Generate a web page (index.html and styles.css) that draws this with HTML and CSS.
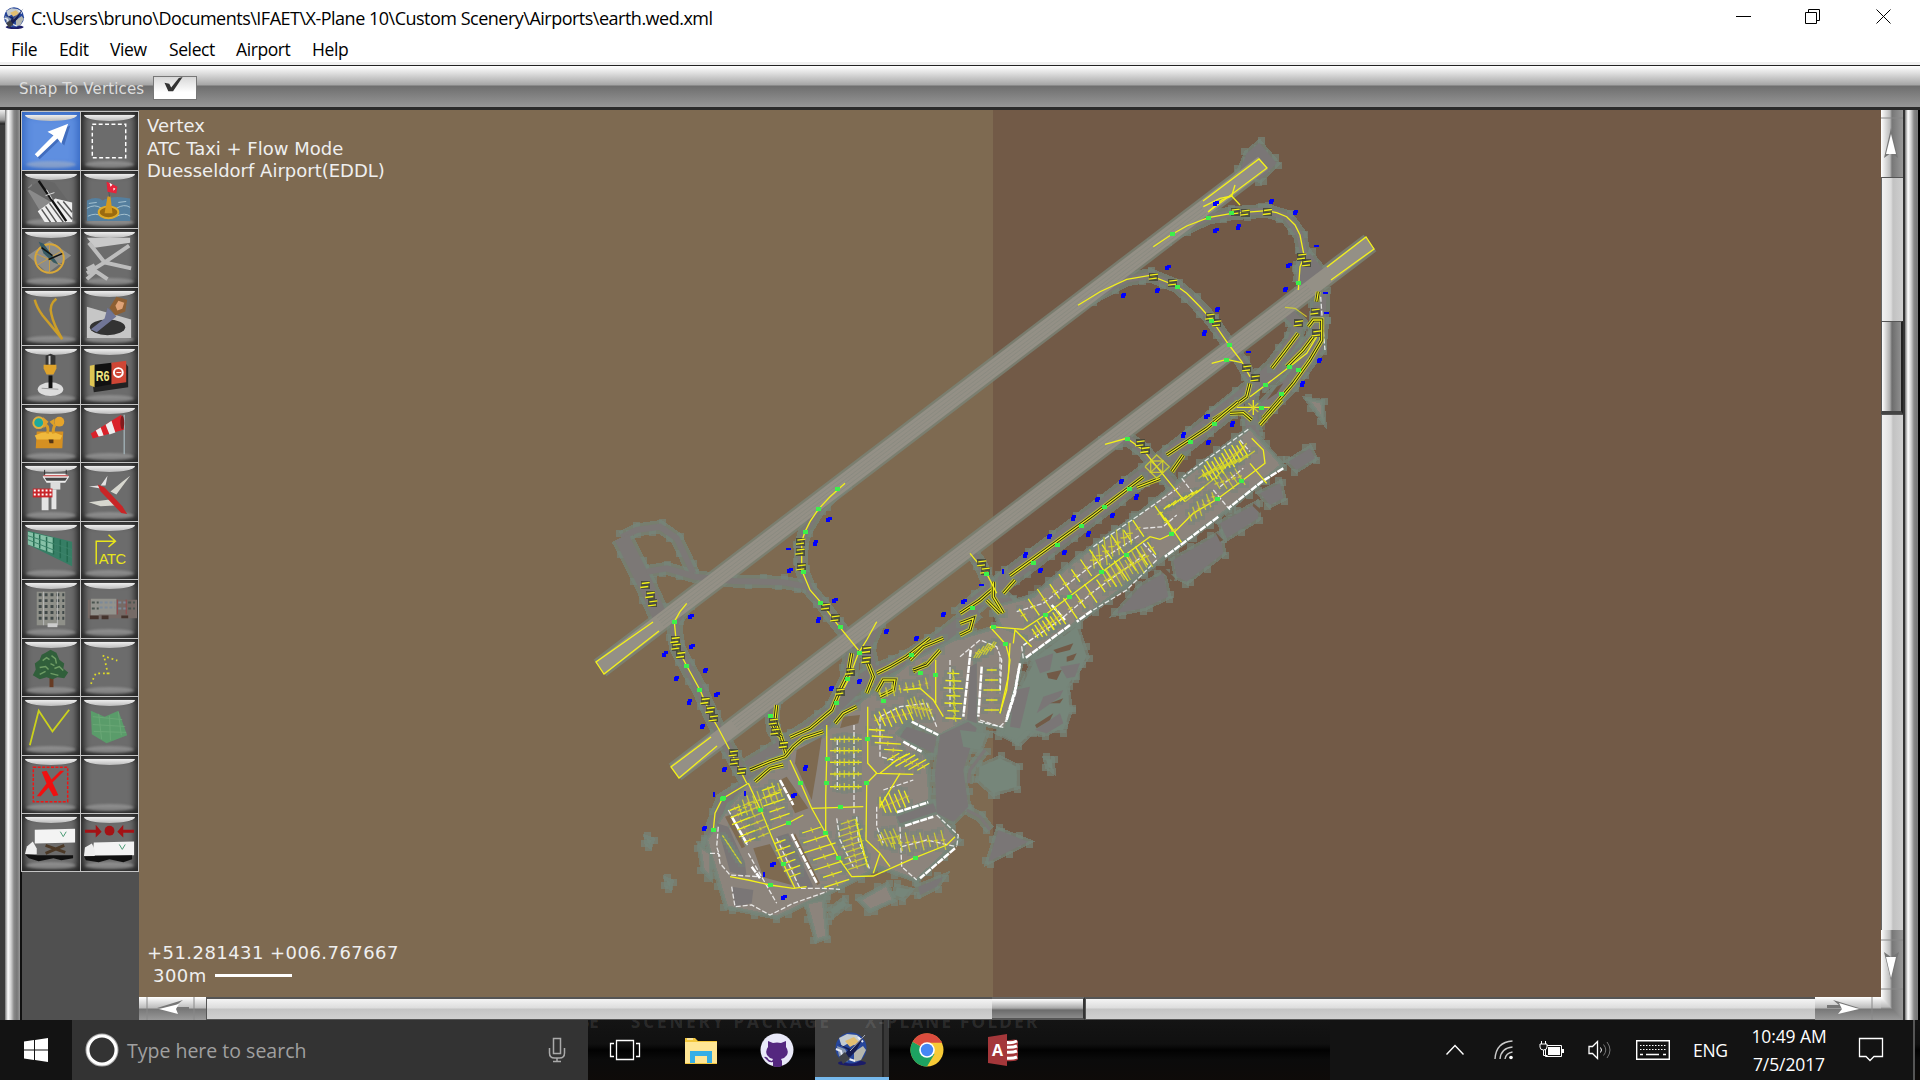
FILE: index.html
```
<!DOCTYPE html>
<html>
<head>
  <meta charset="utf-8">
  <title>earth.wed.xml</title>
  <link rel="stylesheet" href="styles.css">
</head>
<body>
<div class="window">
  <div class="titlebar">
    <svg class="app-icon" viewBox="0 0 34 34"><use href="#globe"/></svg>
    <span class="path">C:\Users\bruno\Documents\IFAET\X-Plane 10\Custom Scenery\Airports\earth.wed.xml</span>
    <svg class="win-buttons" viewBox="0 0 160 34">
      <path d="M0 16.5h15M69.5 12.5h11v11h-11zM72.500 12v-2.500h11v11h-3M140.500 9.500l14 14M154.500 9.500l-14 14" fill="none" stroke="#000"/>
    </svg>
  </div>
  <div class="menubar">
    <span class="m-file">File</span><span class="m-edit">Edit</span><span class="m-view">View</span><span class="m-select">Select</span><span class="m-airport">Airport</span><span>Help</span>
  </div>
  <div class="toolbar">
    <span class="snap">Snap To Vertices</span>
    <span class="checkbox"><svg viewBox="0 0 44 23"><path d="M11 6l5 1 2 4L26 1l4-1-10 15h-5z" fill="#333"/></svg></span>
  </div>

  <div class="main">
    <div class="edge"></div>
    <div class="bar"></div>
    <div class="side">
      <div class="tools">
        <div class="tool active"><svg viewBox="0 0 58 58"><path d="M47 12l-6 20-5-5-20 19-4-4 20-18-6-4z" fill="#234b9c" opacity=".5" transform="translate(2 2)"/><path d="M47 12l-7 20-4-5-20 19-3-3 19-19-6-4z" fill="#fff"/></svg></div>
        <div class="tool"><svg viewBox="0 0 58 58"><path d="M11.500 12.500h34v34h-34z" fill="none" stroke="#fff" stroke-width="1.500" stroke-dasharray="4 2.500"/></svg></div>

        <div class="tool"><svg viewBox="0 0 58 58"><path d="M6 17l4-4v7zM6 20l12-9 34 30v11H25z" fill="#8a8a8a"/><path d="M6 18l13-9 14 3 18 24v8z" fill="#666"/><path d="M16 41l18-13 17 4v20H23z" fill="#eee"/><path d="M20 39l9 13M24 36l11 16M28 33l14 19M36 31l15 18M42 31l9 11" stroke="#555" stroke-width="1.500"/><path d="M17 10l28 41" stroke="#111" stroke-width="2.500"/><path d="M25 19l6 10M24 25l9-3" stroke="#ddd"/></svg></div>
        <div class="tool"><svg viewBox="0 0 58 58"><path d="M6 30q10-5 16 0 10-6 28-2v23H6z" fill="#557f9e"/><path d="M6 38q8-5 15 0t15 0 14-1M7 46q8-4 14 0t15 0 14 0M8 33l8-1M38 32l8-1" fill="none" stroke="#a5c2d0"/><ellipse cx="28" cy="42" rx="10" ry="6" fill="#9a6a10" stroke="#dfab2a" stroke-width="2"/><path d="M24 43l3-17h3l2 17z" fill="#d49a20"/><path d="M27 11l2 15" stroke="#555"/><path d="M26 11l5 2 6 3-1 7-9-2z" fill="#e8233a"/><path d="M29 12l3 2-2 2zM33 17l2 1-2 2z" fill="#fff"/></svg></div>

        <div class="tool"><svg viewBox="0 0 58 58"><path d="M6 27l22-15 22 15-24 18z" fill="#8d8d8a"/><circle cx="28" cy="30" r="14.500" fill="none" stroke="#d9a838" stroke-width="2"/><path d="M28 15v30M15 37l26-15M14 25l27 12" stroke="#c99e44"/><path d="M17 13l5 2 13 18 2 3-5-2-10-9z" fill="#365a63"/><path d="M20 19l11 8M27 31l14-6" stroke="#111" stroke-width="1.500"/></svg></div>
        <div class="tool"><svg viewBox="0 0 58 58"><path d="M6 9h44v5L14 19z" fill="#c9c9c9"/><path d="M8 14l16 20 27 6M6 45l18-11 25-17M14 37l-8 4M6 51l9-8 12 8" fill="none" stroke="#bdbdbd" stroke-width="4"/></svg></div>

        <div class="tool"><svg viewBox="0 0 58 58"><path d="M13 12q2 8 8 16l20 24M35 11q-8 6-5 16 2 10 11 25" fill="none" stroke="#cc9e28" stroke-width="2.500"/></svg></div>
        <div class="tool"><svg viewBox="0 0 58 58"><path d="M6 19l45 13v19H6z" fill="#c6c6c6"/><ellipse cx="27" cy="40" rx="18" ry="8" fill="#333"/><path d="M27 20l9 9-20 16-6-3 14-11z" fill="#707596"/><path d="M29 20l7-11 11 3-2 12-10 4z" fill="#8d5f33"/><path d="M35 18l3-5 6 2-2 6-5 2z" fill="#e0a377"/></svg></div>

        <div class="tool"><svg viewBox="0 0 58 58"><ellipse cx="29" cy="44" rx="13" ry="7" fill="#ddd"/><path d="M27 30h4v13h-4z" fill="#111"/><path d="M24 10l5-2 5 2v10H24z" fill="#333"/><path d="M27 10h2v9h-2z" fill="#ccc"/><path d="M22 19h13v4l-3 6h-7l-3-6z" fill="#dfa32b"/><path d="M20 43l17 1" stroke="#999"/></svg></div>
        <div class="tool"><svg viewBox="0 0 58 58"><path d="M10 21l35-4 3 4v21l-35 5z" fill="#222"/><path d="M9 20l5-1v23l-5-2z" fill="#e0c653"/><path d="M14 19l17-2v22l-17 3z" fill="#111"/><path d="M31 17l15-2v22l-15 2z" fill="#cf4635"/><text class="sign" x="15" y="36" font-size="15" textLength="14" lengthAdjust="spacingAndGlyphs" fill="#f2e681">R6</text><circle cx="38" cy="27" r="4.500" fill="none" stroke="#fff" stroke-width="2"/><path d="M36 27h5" stroke="#fff"/></svg></div>

        <div class="tool"><svg viewBox="0 0 58 58"><path d="M15 27h27l-1 17H14z" fill="#d59022"/><path d="M13 31q14-7 28 0l-2 4H15z" fill="#f0b93c"/><path d="M22 20q6 0 4 9M36 19q-5 2-4 10" fill="none" stroke="#d99c24" stroke-width="3"/><circle cx="17" cy="18" r="5.500" fill="#1ca99d" stroke="#deb03f" stroke-width="2"/><path d="M21 12l6 5-5 7z" fill="#dea02b"/><circle cx="38" cy="17" r="5" fill="#e5a42b"/><path d="M33 14l-5 3 5 5z" fill="#dba02a"/><path d="M27 35h5v4h-4z" fill="#543616"/></svg></div>
        <div class="tool"><svg viewBox="0 0 58 58"><path d="M44 10v40" stroke="#9dacb1" stroke-width="1.500"/><path d="M10 29l31-19 3 15-32 9z" fill="#d9222a"/><path d="M15 26l5-3 3 8-5 1zM25 20l6-4 4 12-6 2z" fill="#eee"/><ellipse cx="42" cy="18" rx="2" ry="7" fill="#821a1c"/></svg></div>

        <div class="tool"><svg viewBox="0 0 58 58"><path d="M20 31h7v17h-7zM30 27h5v20h-5z" fill="#e4e4e4"/><path d="M21 14l3-3h21l3 3-4 6H25z" fill="#eee"/><path d="M23 15h23l-2 3H25z" fill="#444"/><path d="M22 13h25" stroke="#c02a2a"/><path d="M29 19h10v8H29z" fill="#ddd"/><path d="M11 26h20v9H11z" fill="#c9252a"/><path d="M12 28h18M12 32h18" stroke="#fff" stroke-width="2" stroke-dasharray="2 2"/><path d="M23 7v5M45 7v5" stroke="#333"/></svg></div>
        <div class="tool"><svg viewBox="0 0 58 58"><path d="M36 32l14-19-8 6-12 10zM31 37l-23 3 12 4 19-1z" fill="#d7d7cf"/><path d="M20 23l7-10-2 10zM20 26l-12-2 10-1z" fill="#e3e3e3"/><path d="M17 22l7 3 18 19 5 8-6-1-21-22z" fill="#c92526"/></svg></div>

        <div class="tool"><svg viewBox="0 0 58 58"><path d="M6 9l45 11v25L6 23z" fill="#367e65"/><path d="M6 10l26 6v16L6 23z" fill="#86c1a7"/><path d="M12 11v14M18 13v14M25 15v15M32 16v17M39 18v19M46 20v21" stroke="#246b50" stroke-width="1.500"/><path d="M6 14l45 14M6 18l45 18" stroke="#3b8369"/></svg></div>
        <div class="tool"><svg viewBox="0 0 58 58"><path d="M15.500 43V19.500h19M28 13l7 6.500-7 6" fill="none" stroke="#e8e51b" stroke-width="1.500"/><text x="18" y="43" font-size="15" textLength="28" fill="#e8e51b">ATC</text></svg></div>

        <div class="tool"><svg viewBox="0 0 58 58"><path d="M15 12h29v34H15z" fill="#8f9089"/><path d="M17 15h26M17 21h26M17 27h26M17 33h26M17 39h26" stroke="#404848" stroke-width="3" stroke-dasharray="3 3"/><path d="M22 12v34M36 12v34" stroke="#bbb"/><path d="M26 44h10v4h-10z" fill="#ccc"/></svg></div>
        <div class="tool"><svg viewBox="0 0 58 58"><path d="M7 20h50v19H7z" fill="#756a66"/><path d="M10 19h8v17h-8zM18 19h18v16H18z" fill="#93938d"/><path d="M11 23h7M11 29h7M48 23h7M48 29h7" stroke="#4b5550" stroke-width="2" stroke-dasharray="3 2"/><path d="M19 23h16M19 28h16M38 23h8M38 29h8" stroke="#7d8a99" stroke-width="2" stroke-dasharray="3 2"/><path d="M37 20v15M46 20v15" stroke="#96484a"/><path d="M9 36h9v4H9zM21 36h7v4h-7zM41 36h7v3h-7z" fill="#45342d"/></svg></div>

        <div class="tool"><svg viewBox="0 0 58 58"><path d="M28 34h4v15h-4z" fill="#673b23"/><path d="M29 11l6 3 3 7 5 4-1 5 5 4-4 6-7-1-5 2-6-2-7 2-7-4 3-6-1-6 5-4 2-5 4-2z" fill="#315f3b"/><path d="M21 22l4-3 3 2M18 29l6-1 3 3M30 17l4 3 1 5M33 30l5-2 4 4M18 36l6-3M29 35l8 2M29 25l4 2" fill="none" stroke="#6f9d65" stroke-width="1.500"/></svg></div>
        <div class="tool"><svg viewBox="0 0 58 58"><path d="M22 17l15 5M24 20l3 14v3M29 35H15l-5 11" fill="none" stroke="#dedb28" stroke-width="1.800" stroke-dasharray="1.800 3"/></svg></div>

        <div class="tool"><svg viewBox="0 0 58 58"><path d="M8 49l9-35 14 21 17-22" fill="none" stroke="#cbd21b" stroke-width="1.800"/></svg></div>
        <div class="tool"><svg viewBox="0 0 58 58"><path d="M10 14l14 6 14-6 9 25-21 8-15-9z" fill="#5a9c6a"/><path d="M12 20l30 3M12 28l33 2M13 35l33 1M18 17l3 26M29 19l1 25M38 15l3 24" stroke="#74ae7d" opacity=".6"/></svg></div>

        <div class="tool"><svg viewBox="0 0 58 58"><path d="M11.500 11.500h35v35h-35z" fill="none" stroke="#f01414" stroke-width="1.500" stroke-dasharray="3 1.500"/><path d="M20 16l5-1 5 9 9-9h4L31 27l6 13-5 1-5-9-8 9h-4l10-13z" fill="#f01010"/></svg></div>
        <div class="tool"></div>

        <div class="tool"><svg viewBox="0 0 58 58"><path d="M13 16l41-1v14l-41 1z" fill="#f3f3f3"/><path d="M5 33l6-5 4 7v6H3z" fill="#eee"/><path d="M3 41l13 1 36 0v3l-12 2-8-2-15 3-10-3z" fill="#111"/><path d="M24 32l20 7M43 32l-19 8" stroke="#4b3927" stroke-width="3"/><path d="M39 18l3 5 3-5" fill="none" stroke="#499a74"/></svg></div>
        <div class="tool"><svg viewBox="0 0 58 58"><path d="M4 16h11v-5l6 7-6 6v-5H4zM54 16H43v-5l-6 7 6 6v-5h11z" fill="#a41215"/><circle cx="29" cy="17" r="5" fill="#a41215"/><path d="M13 29l41-1v14H12z" fill="#f3f3f3"/><path d="M4 34l7-4 3 6v7H3z" fill="#eee"/><path d="M3 43l49-1v4l-9 3-14-3-11 3-13-2z" fill="#111"/><path d="M39 31l3 5 3-5" fill="none" stroke="#499a74"/></svg></div>
      </div>
    </div>

    <div class="view">
      <div class="map-row">
        <div class="map">
          <svg id="map" viewBox="139 110 1742 887"></svg>
          <div class="status">Vertex<br>ATC Taxi + Flow Mode<br>Duesseldorf Airport(EDDL)</div>
          <div class="coords">+51.281431 +006.767667<div class="scale">300m <i></i></div></div>
        </div>
        <div class="vscroll">
          <div class="varrow"><svg viewBox="0 0 22 67"><path d="M0 8h22" stroke="#888"/><path d="M10 18l7 30-7-5-7 5z" fill="#777"/><path d="M10 24l5 20H5z" fill="#fff"/></svg></div>
          <div class="vtrack t1"></div>
          <div class="vthumb"></div>
          <div class="vtrack"></div>
          <div class="varrow"><svg viewBox="0 0 22 67"><path d="M0 10h22M0 59h22" stroke="#888"/><path d="M10 50l8-28-8 5-7-5z" fill="#777"/><path d="M10 48l5-21H5z" fill="#fff"/></svg></div>
        </div>
      </div>
      <div class="hscroll">
        <div class="harrow"><svg viewBox="0 0 67 23"><path d="M8 0v23M55 0v23" stroke="#888"/><path d="M18 11l26-8-9 7h15v3H36z" fill="#777"/><path d="M20 12l20-5-3 5 2 5z" fill="#fff"/></svg></div>
        <div class="htrack h1"></div>
        <div class="hthumb"></div>
        <div class="htrack"></div>
        <div class="harrow right"><svg viewBox="0 0 67 23"><path d="M57 0v23" stroke="#888"/><path d="M44 11L18 3l6 5H12v3h9z" fill="#777"/><path d="M44 12l-20-6 3 6-4 5z" fill="#fff"/></svg></div>
        <div class="corner"></div>
      </div>
    </div>
    <div class="gap"></div>
    <div class="bar bar-right"></div>
  </div>

  <div class="taskbar">
    <div class="ghost"><span class="g1">SE</span><span class="g2">SCENERY PACKAGE</span><span>X-PLANE FOLDER</span></div>
    <div class="start"><svg viewBox="0 0 24 24"><path d="M0 3.400l10-1.400v9.500H0zM11 1.900L24 0v11.500H11zM0 12.500h10V22L0 20.600zM11 12.500h13V24l-13-1.900z" fill="#fff"/></svg></div>
    <div class="search">
      <svg class="cortana" viewBox="0 0 34 34"><circle cx="17" cy="17" r="15.500" fill="none" stroke="#aaa" stroke-width="2"/><circle cx="17" cy="17" r="14" fill="none" stroke="#fff" stroke-width="3"/></svg>
      <span class="hint">Type here to search</span>
      <svg class="mic" viewBox="0 0 18 26"><path d="M5.500 1.500h7v15h-7zM1.500 11v5q0 5 5 5h5q5 0 5-5v-5M9 21v4M5 24.500h8" fill="none" stroke="#aaa" stroke-width="1.500"/></svg>
    </div>
    <div class="task"><svg viewBox="0 0 34 34"><path d="M8.500 7.500h17v19h-17zM6 10.500H2.500v13H6M28 10.500h3.500v13H28" fill="none" stroke="#fff" stroke-width="1.300"/></svg></div>
    <div class="task"><svg viewBox="0 0 34 34"><path d="M1 5h10l3 3h19v23H1z" fill="#f3c73d"/><path d="M1 9h32v21H1z" fill="#ffe695"/><path d="M6 18h22v12h-5v-7H11v7H6z" fill="#35aee6"/><path d="M3 6h6" stroke="#fff"/></svg></div>
    <div class="task"><svg viewBox="0 0 34 34"><circle cx="17" cy="17" r="16.500" fill="#e9e9f8"/><path d="M8 8l5 2q4-1 8 0l5-2v6q3 4 1 8-2 3-6 4l1 2v5q-5 2-9 0v-4q-4 1-6-2l-3-3q3-1 5 3l3 1 1-2q-4-1-6-4-2-4 1-8z" fill="#54277f"/></svg></div>
    <div class="task on"><svg viewBox="0 0 34 34"><g id="globe"><ellipse cx="18" cy="31" rx="14" ry="3" fill="#1b1c68"/><circle cx="17" cy="16" r="15.500" fill="#26469b"/><path d="M5 6l8-4 10 1 5 5-6 5-9-1-5 3z" fill="#c4cbd0"/><path d="M11 9l9-4 5 5-9 5z" fill="#e2be72"/><path d="M3 14l8 3 5 9-3 4-8-6z" fill="#8997ae"/><path d="M20 20l9-6 3 4-5 10-7 2z" fill="#b4b6ae"/><path d="M2 17l5 2 1 4M15 27l6 2M24 5l5 5" stroke="#e6ebf5" stroke-width="2" fill="none"/><path d="M4 12l13 5 13-13-8 15-11 11-4-3 7-9z" fill="#151d52"/><path d="M16 19L31 3" stroke="#a9adb8"/><path d="M5 25l6-5 5 7-7 5z" fill="#3f4248"/></g></svg></div>
    <div class="task chrome"><svg viewBox="0 0 34 34"><circle cx="17" cy="17" r="16.500" fill="#f7ca36"/><path d="M17 17L2.700 8.700A16.500 16.500 0 0 0 17 33.500L24.500 21z" fill="#1da261"/><path d="M17 17L2.700 8.700A16.500 16.500 0 0 1 31.800 9.500H17z" fill="#db4c3e"/><path d="M17 9h15" stroke="#db4c3e"/><circle cx="17" cy="17" r="7.800" fill="#fff"/><circle cx="17" cy="17" r="6.200" fill="#4587f3"/></svg></div>
    <div class="task"><svg viewBox="0 0 34 34"><path d="M19 8q12-3 13 0v18q-1 3-13 2z" fill="#a4373a"/><path d="M19 9q6 2 12-1M19 14q7 1 12-1M19 19q7 1 12-1M19 25q7 1 12-1" stroke="#fff" stroke-width="3" fill="none"/><path d="M2 4l19-3v32L2 30z" fill="#a4373a"/><text x="6" y="23" font-size="16" font-weight="bold" fill="#fff">A</text></svg></div>

    <div class="tray">
      <svg class="chev" viewBox="0 0 18 12"><path d="M.5 10.500L9 1.500l8.500 9" fill="none" stroke="#fff" stroke-width="1.400"/></svg>
      <svg class="wifi" viewBox="0 0 20 20"><path d="M1 19Q2 2 18.500 1M6 19Q7 8 18.500 7M11 19q1-6 7.500-7" fill="none" stroke="#ccc" stroke-width="1.400"/><circle cx="17" cy="17.500" r="1.800" fill="#fff"/></svg>
      <svg class="batt" viewBox="0 0 26 20"><path d="M6.500 5.500h16v11h-16z" fill="none" stroke="#fff"/><path d="M9 7h12v8H9zM23 9h2v4h-2z" fill="#fff"/><path d="M1 4h7v3q0 3-3.500 3T1 7z" fill="#151515" stroke="#fff"/><path d="M2.500 4V1M6.500 4V1M4.500 10v5.500h4" fill="none" stroke="#fff"/></svg>
      <svg class="vol" viewBox="0 0 24 20"><path d="M1 6.500h3.500l5-5v17l-5-5H1z" fill="none" stroke="#fff" stroke-width="1.300"/><path d="M12.500 7.500q2 2.500 0 5" fill="none" stroke="#fff"/><path d="M15.500 4.500q4.500 5.500 0 11M19 2q6 8 0 16" fill="none" stroke="#777"/></svg>
      <svg class="kbd" viewBox="0 0 34 20"><path d="M.7.700h32.600v18.600H.7z" fill="none" stroke="#fff" stroke-width="1.400"/><path d="M4 5.500h26M4 9.500h26" stroke="#fff" stroke-dasharray="1.500 1.500"/><path d="M4 14.500h3M10 14.500h13M27 14.500h3" stroke="#fff" stroke-width="1.300"/></svg>
      <span class="lang">ENG</span>
      <div class="clock"><span>10:49 AM</span><span class="date">7/5/2017</span></div>
      <svg class="note" viewBox="0 0 26 26"><path d="M1.500 1.500h23v18h-8.500l-4 4-4-4H1.500z" fill="none" stroke="#fff" stroke-width="1.300"/></svg>
    </div>
  </div>
</div>
<script src="map.js"></script>
</body>
</html>
```
FILE: styles.css
```
* { box-sizing: border-box; }

body {
  margin: 0;
  background: #000;
  overflow: hidden;
  font-family: "Open Sans", "Noto Sans", sans-serif;
}

svg { display: block; }

.window {
  width: 1920px;
  height: 1080px;
  display: flex;
  flex-direction: column;
}

.titlebar {
  height: 34px;
  background: #fff;
  display: flex;
  align-items: center;
  padding-left: 3px;
  padding-top: 2px;
}

.app-icon { width: 22px; height: 24px; }

.path {
  margin-left: 6px;
  font-size: 18px;
  letter-spacing: -0.5px;
  white-space: nowrap;
  flex: 1;
}

.win-buttons { width: 160px; height: 34px; margin-right: 24px; margin-top: -2px; }

.menubar {
  height: 31px;
  background: #fff;
  border-bottom: 3px solid #f0f0f0;
  display: flex;
  padding-left: 11px;
  line-height: 31px;
  font-size: 17.5px;
  letter-spacing: -0.4px;
}

.m-file { width: 48px; }
.m-edit { width: 51px; }
.m-view { width: 59px; }
.m-select { width: 67px; }
.m-airport { width: 76px; }

.toolbar {
  height: 45px;
  border-top: 1px solid #222;
  border-bottom: 3px solid #2b2b2b;
  background: linear-gradient(#fff 0, #e4e4e4 6px, #a5a5a5 19px, #6e6e6e 20px, #979797 41px);
  display: flex;
  padding-left: 19px;
}

.snap {
  width: 134px;
  padding-top: 14px;
  font: 15px "DejaVu Sans", sans-serif;
  letter-spacing: 0.15px;
  color: #dedede;
  white-space: nowrap;
}

.checkbox {
  width: 44px;
  height: 24px;
  margin-top: 10px;
  background: linear-gradient(#d8d8d8, #fff 70%);
  border: 1px solid #777;
}

.main { height: 910px; display: flex; }

.edge {
  width: 5px;
  background: linear-gradient(#eee 0, #999 10px, #222 14px, #3c3c3c 15px);
}

.bar {
  width: 15px;
  background: linear-gradient(90deg, #777 0, #fff 3px, #d0d0d0 6px, #888 9px, #777 12px, #999 15px);
}

.side {
  width: 119px;
  border-left: 2px solid #111;
  background: #505050;
}

.tools {
  display: grid;
  grid-template-columns: 59px 59px;
  grid-auto-rows: 58.5px;
  padding-top: 1px;
  margin-left: -1px;
}

.tool {
  position: relative;
  border: 1px solid #c4c4c4;
  border-width: 1px 0 0 1px;
  background: #6c6c6c;
  box-shadow: inset 0 0 6px 3px #222;
}

.tool:nth-child(even) { border-right-width: 1px; }
.tool:nth-child(n+25) { border-bottom-width: 1px; }

.tool.active { background: #5f8fe0; box-shadow: inset 0 0 8px 2px #2f62bd; }

/* glass highlight over and under the icon */
.tool::before {
  content: "";
  position: absolute;
  left: 3px;
  right: 3px;
  top: 3px;
  height: 6px;
  background: linear-gradient(#eee, #bbb);
  border-radius: 0 0 50% 50% / 0 0 100% 100%;
}

.tool::after {
  content: "";
  position: absolute;
  left: 4px;
  right: 4px;
  bottom: 2px;
  height: 7px;
  background: rgba(190, 190, 190, 0.45);
  border-radius: 50%;
  filter: blur(1px);
}

.tool svg { position: relative; z-index: 1; width: 57px; height: 57px; }
.tool text { font-family: "Liberation Sans", sans-serif; }
.tool .sign { font-weight: bold; }

.view { width: 1764px; }
.map-row { display: flex; height: 887px; }

.map { position: relative; width: 1742px; background: linear-gradient(90deg, #7e6a51 854px, #725a47 854px); }
.map > svg { width: 1742px; height: 887px; }

.status, .coords {
  position: absolute;
  left: 8px;
  top: 5px;
  font: 18px/22.5px "DejaVu Sans", sans-serif;
  color: #efefef;
}

.coords { top: 832px; letter-spacing: 0.45px; }
.scale { display: flex; align-items: center; gap: 8px; padding-left: 6px; }
.scale i { width: 77px; height: 3px; background: #fff; }

.vscroll { width: 22px; display: flex; flex-direction: column; }
.varrow { height: 67px; background: linear-gradient(90deg, #fff, #bbb 9px, #777 11px, #999); }
.varrow svg { width: 22px; height: 67px; }
.vtrack {
  flex: 1;
  border-top: 1px solid #555;
  border-left: 1px solid #666;
  background: linear-gradient(90deg, #f2f2f2, #ddd 9px, #c2c2c2 11px, #d0d0d0);
}
.vtrack.t1 { flex: none; height: 144px; }
.vthumb {
  height: 93px;
  border: 1px solid #555;
  border-right: 2px solid #222;
  border-bottom: 3px solid #444;
  background: linear-gradient(90deg, #fff, #aaa 8px, #6d6d6d 10px, #8f8f8f);
}

.hscroll { height: 23px; display: flex; }
.harrow { width: 67px; background: linear-gradient(#fff, #bbb 11px, #777 12px, #999); }
.harrow.right { width: 66px; }
.harrow svg { width: 67px; height: 23px; }
.htrack {
  flex: 1;
  border: 1px solid #555;
  border-width: 2px 0 1px 1px;
  background: linear-gradient(#f4f4f4, #ddd 9px, #c4c4c4 10px, #d0d0d0);
}
.htrack.h1 { flex: none; width: 786px; }
.hthumb {
  width: 93px;
  border-top: 2px solid #666;
  border-right: 2px solid #333;
  border-bottom: 2px solid #555;
  background: linear-gradient(#fff, #aaa 9px, #6b6b6b 11px, #8b8b8b);
}
.corner { width: 22px; background: linear-gradient(#fff, #bbb 10px, #777 12px, #999); }
.corner::before {
  content: "";
  display: block;
  height: 23px;
  clip-path: polygon(0 0, 100% 0, 100% 100%);
  background: linear-gradient(90deg, #fff, #bbb 9px, #777 11px, #999);
}

.gap { width: 2px; background: #333; }
.bar-right { width: 13px; }

.taskbar {
  position: relative;
  height: 60px;
  display: flex;
  background: linear-gradient(#141414 0, #101010 24px, #020202 30px, #0b0b0b 40px, #0e0b09);
}

/* wallpaper text that shows through the translucent bar */
.ghost {
  position: absolute;
  z-index: 2;
  left: 588px;
  top: 0;
  height: 9px;
  display: flex;
  overflow: hidden;
  font: bold 17px/3px "Open Sans", sans-serif;
  color: rgba(255, 255, 255, 0.11);
  letter-spacing: 2.3px;
  white-space: nowrap;
}
.g1 { width: 43px; letter-spacing: 0; text-indent: -8px; }
.g2 { width: 234px; letter-spacing: 2.9px; }

.start { width: 72px; padding: 18px 0 0 24px; background: #131313; }
.start svg { width: 24px; height: 24px; }

.search { width: 516px; background: #333; display: flex; align-items: center; padding-left: 13px; z-index: 1; }
.cortana { width: 34px; height: 34px; }
.hint { margin-left: 8px; flex: 1; font-size: 19.5px; color: #a0a0a0; }
.mic { width: 18px; height: 26px; margin-right: 22px; }

.task { width: 76px; display: flex; align-items: center; justify-content: center; z-index: 1; }
.task svg { width: 34px; height: 34px; }
.task.on {
  width: 74px;
  background: linear-gradient(90deg, #424242 67px, #252525 67px, #252525 69px, #383838 69px);
  border-bottom: 3px solid #76b9ed;
  padding-right: 2px;
}
.task:nth-of-type(4) { margin-left: -1px; }

.tray {
  flex: 1;
  display: flex;
  align-items: center;
  background: #131313;
  border-right: 2px solid #555;
  margin-right: 5px;
  margin-left: 289px;
  color: #fff;
}
.chev { width: 18px; height: 12px; margin-left: 116px; }
.wifi { width: 20px; height: 20px; margin-left: 30px; }
.batt { width: 26px; height: 20px; margin-left: 25px; }
.vol { width: 24px; height: 20px; margin-left: 23px; }
.kbd { width: 34px; height: 20px; margin-left: 24px; }
.lang { margin-left: 23px; width: 57px; font-size: 17.5px; letter-spacing: -0.3px; }
.clock {
  width: 78px;
  display: flex;
  flex-direction: column;
  align-items: center;
  font-size: 17.5px;
  line-height: 28px;
  letter-spacing: -0.1px;
  white-space: nowrap;
}
.note { width: 26px; height: 26px; margin-left: 30px; }

/* map layers */
#map path { fill: none; }
#map rect { shape-rendering: crispEdges; }
#map .halo { stroke: #76867a; opacity: 0.75; stroke-linejoin: miter; shape-rendering: crispEdges; }
#map .edge-halo { stroke: #7b8478; opacity: 0.8; }
#map .node { fill: #76867a; opacity: 0.7; }
#map .speck { fill: #74857a; opacity: 0.45; }
#map .taxi { stroke: #7c7876; }
#map .rwy { stroke: #949086; }
#map .rline { stroke: #88897f; stroke-width: 1; opacity: 0.8; }
#map .apron { fill: #8c847c; }
#map .roof { fill: #7a7676; }
#map .grass { fill: #76867a; }
#map .left { fill: #7e6a51; }
#map .right { fill: #725a47; }
#map .y { stroke: #f3f11a; stroke-width: 1.300; }
#map .yd { stroke: #d9d827; stroke-width: 1.300; opacity: 0.8; }
#map .y4 { stroke: #d8d822; stroke-width: 5; opacity: 0.8; }
#map .k3 { stroke: #22221a; stroke-width: 3; }
#map .w { stroke: #fff; stroke-width: 1.300; stroke-dasharray: 5 2; opacity: 0.8; }
#map .w3 { stroke: #fff; stroke-width: 2.500; stroke-dasharray: 7 1; }
#map .green { fill: #3cf04a; }
#map .blue { fill: #00f; }
#map .dark { fill: #3e4234; opacity: 0.8; }
```
FILE: map.js
```
var NS = "http://www.w3.org/2000/svg";
var map = document.getElementById("map");
var layers = {};
["halo", "base", "speck", "hole", "runway", "white", "mark", "dot"].forEach(function(n) {
  layers[n] = document.createElementNS(NS, "g");
  map.appendChild(layers[n]);
});

// survey sheets, three units to a pixel: [x, y] of the sheet's corner
var A = [1160, 120], B = [590, 480], C = [680, 640], D = [960, 400];

function pts(s, str) {
  return str.split(" ").map(function(p) {
    p = p.split(",");
    return [s[0] + p[0] / 3, s[1] + p[1] / 3];
  });
}

function el(layer, tag, cls, attrs) {
  var e = document.createElementNS(NS, tag);
  e.setAttribute("class", cls);
  for (var k in attrs) e.setAttribute(k, attrs[k]);
  layers[layer].appendChild(e);
}

function draw(layer, cls, p, close, width) {
  var a = { d: "M" + p.map(function(q) { return q[0].toFixed(1) + " " + q[1].toFixed(1); }).join("L") + (close ? "z" : "") };
  if (width) a["stroke-width"] = width;
  el(layer, "path", cls, a);
}

function box(layer, cls, x, y, w, h) {
  el(layer, "rect", cls, { x: Math.round(x - w / 2), y: Math.round(y - h / 2), width: w, height: h });
}

// squares that ride along the outline of a pavement
function nodes(p, off, step) {
  for (var i = 1; i < p.length; i++) {
    var dx = p[i][0] - p[i - 1][0], dy = p[i][1] - p[i - 1][1];
    var len = Math.sqrt(dx * dx + dy * dy) || 1;
    for (var t = 0, n = 0; t < len; t += step, n++) {
      var side = n % 2 ? off : -off;
      box("halo", "node", p[i - 1][0] + dx * t / len - dy / len * side, p[i - 1][1] + dy * t / len + dx / len * side, 7, 7);
    }
  }
}

function taxi(s, str, w) {
  var p = pts(s, str);
  draw("halo", "halo", p, false, w + 6);
  nodes(p, w / 2 + 1, 15);
  draw("base", "taxi", p, false, w - 1);
}

function area(s, cls, str) {
  var p = pts(s, str);
  draw("halo", "halo", p, true, 6);
  nodes(p.concat([p[0]]), 3, 11);
  draw("base", cls, p, true);
  if (cls == "apron") draw("base", "halo", p, true, 3);
}

function line(s, cls, str) { draw(cls[0] == "w" ? "white" : "mark", cls, pts(s, str)); }

function twin(s, str) {
  pts(s, str).forEach(function(p) { box("speck", "speck", p[0], p[1], 9, 9); });
  line(s, "y4", str);
  line(s, "k3", str);
  line(s, "y", str);
}

// n short strokes spread from one point to another
function ribs(s, cls, x1, y1, x2, y2, n, dx, dy) {
  for (var i = 0; i < n; i++) {
    var x = x1 + (x2 - x1) * i / (n - 1), y = y1 + (y2 - y1) * i / (n - 1);
    var k = 0.75 + (i * 7 % 5) * 0.12;
    box("speck", "speck", s[0] + (x - dx * k) / 3, s[1] + (y - dy * k) / 3, 7, 7);
    box("speck", "speck", s[0] + (x + dx * k) / 3, s[1] + (y + dy * k) / 3, 7, 7);
    line(s, cls, (x - dx * k) + "," + (y - dy * k) + " " + (x + dx * k) + "," + (y + dy * k));
    // spur off each lead-in line
    line(s, "yd", (x - dy * .3) + "," + (y + dx * .2) + " " + (x + dy * .25) + "," + (y - dx * .2));
  }
}

// hold line block: dark patch with yellow bars
function hold(s, list) {
  list.split(" ").forEach(function(q) {
    var c = q.split(",");
    var x = s[0] + c[0] / 3, y = s[1] + c[1] / 3;
    box("mark", "dark", x, y, 9, 8);
    [-2, 2].forEach(function(d) {
      draw("mark", "y", [[x - 4 - d / 3, y + d + .5], [x + 4 - d / 3, y + d - .5]]);
    });
  });
}

function runway(x1, y1, x2, y2) {
  var p = [[x1, y1], [x2, y2]];
  draw("halo", "edge-halo", p, false, 21);
  draw("runway", "rwy", p, false, 16);
  [-5, -1.5, 1.5, 5].forEach(function(d) {
    draw("runway", "rline", [[x1 + 60 + d * .6, y1 - 46 + d * .8], [x2 - 60 + d * .6, y2 + 46 + d * .8]]);
  });
}

// taxiways
area(A, "roof", "298,68 350,130 300,180 240,150 260,100");
taxi(A, "-20,380 36,343 145,293 215,280 320,272 380,290 420,345 433,410 418,490", 8);
taxi(A, "-246,556 -180,520 -100,478 -30,466 50,498 100,540 155,600 205,672 245,725 275,780 275,860", 8);
area(A, "roof", "450,400 500,460 420,510 415,440");
taxi(A, "480,510 478,600 470,680 390,790 300,880", 14);
taxi(A, "370,562 415,610 400,660 340,740 275,800 150,900", 12);
taxi(A, "470,640 380,740 300,800", 9);
taxi(B, "765,10 685,88 645,155 632,200 635,270 660,330 695,370 740,430 805,510", 8);
taxi(B, "95,172 140,150 210,140 260,175 310,280", 7);
taxi(B, "95,172 165,310 210,410", 16);
taxi(B, "170,275 230,265 315,290 430,303 580,307 650,320", 7);
taxi(B, "290,370 253,425 260,500 290,557 330,630 365,710 400,780 430,830 455,875 480,920", 10);
taxi(B, "555,660 545,710 550,750 580,800 600,850 632,910 670,980", 8);
taxi(B, "860,425 830,500 850,590 900,620", 11);
taxi(B, "785,520 775,600 730,690 650,750 570,800 470,860", 12);
taxi(B, "480,890 600,840 700,760 800,680 900,640 1020,540", 13);
taxi(B, "730,690 830,590 950,540 1060,470 1160,390", 13);
taxi(D, "0,650 60,600 150,530 560,220 840,0", 15);
taxi(D, "0,690 90,560 60,490 30,450", 8);
taxi(D, "430,135 500,115 550,150 590,200 680,300", 9);
taxi(D, "90,560 150,620 230,650", 14);
taxi(D, "870,20 880,110", 14);
taxi(C, "210,430 130,480 100,560 90,620", 10);

// aprons
area(D, "apron", "870,85 965,195 800,330 600,480 400,630 200,775 130,700 100,620 220,590 360,470 530,350 670,235");
area(C, "apron", "210,420 320,350 340,320 430,290 440,270 560,170 700,60 820,0 960,-40 1040,-10 1015,100 975,265 890,245 885,60 865,240 780,285 690,240 650,280 740,350 750,480 650,520 660,560 770,520 835,600 710,720 600,680 440,760 290,830 140,800 80,600 140,510");
area(C, "apron", "380,790 430,780 440,890 410,900");
area(C, "apron", "540,780 620,735 640,780 570,810");
area(C, "grass", "650,740 690,750 670,775 645,765");
area(C, "grass", "450,810 490,780 500,795 460,825");
area(C, "apron", "60,620 90,640 90,710 70,690");
area(C, "roof", "715,740 790,710 770,740 720,765");
area(C, "roof", "955,570 1045,605 925,665");
area(C, "grass", "900,380 960,355 1010,380 1010,440 940,460 895,420");
area(C, "roof", "780,285 865,245 890,265 850,390 865,500 820,545 770,520 765,400");
area(C, "roof", "870,80 890,70 890,250 862,240");
area(C, "roof", "680,260 770,290 760,340 660,290");
area(C, "roof", "650,530 760,490 770,515 660,550");
area(C, "roof", "1000,160 1050,140 1010,270 985,260");
taxi(C, "915,330 870,390 865,430", 4);
taxi(C, "860,510 900,530 930,570", 4);
area(C, "grass", "960,280 1060,270 1020,310");
area(C, "roof", "110,550 145,560 195,670 200,710 150,695");
area(C, "roof", "155,740 220,750 215,790 165,800");
area(C, "roof", "290,590 325,580 400,740 360,745");
area([640, 830], "grass", "20,25 35,30 30,45 22,38");
area([640, 830], "grass", "80,150 92,155 90,170 82,165");
area([1040, 750], "grass", "18,28 35,28 38,60 24,50");

// hangars on the south-east side
area(D, "roof", "640,480 780,400 790,460 680,545 650,530");
area(D, "roof", "540,560 610,520 625,590 550,625 470,640");
area(D, "roof", "780,370 890,310 895,355 800,415");
area(D, "roof", "900,280 960,250 970,295 930,315");
area(D, "roof", "985,185 1050,145 1065,175 1010,210");
area(D, "apron", "1045,0 1085,5 1090,60 1060,20");
area(D, "grass", "230,770 350,680 380,770 320,860 330,930 310,990 200,990 170,1020 130,1000 190,850");
area(D, "roof", "225,780 280,760 270,810 240,820");
area(D, "roof", "300,800 360,790 345,830 320,835");
area(D, "roof", "250,890 310,870 300,890 230,940");
area(D, "roof", "225,990 300,940 310,970 260,1000");
area(D, "roof", "165,870 210,860 180,985 150,980");
area(D, "grass", "0,990 80,1000 60,1050 10,1040");

// grass left open between the pavements
[["left", C, "150,525 195,620 185,625 135,530"],
 ["left", C, "220,625 270,612 335,735 250,712"],
 ["left", C, "350,330 425,290 410,390 395,480 345,370"],
 ["left", C, "345,580 420,730 412,735 340,590"],
 ["left", C, "320,410 385,505 345,520 300,420"],
 ["left", C, "490,230 540,225 535,250 480,265"],
 ["right", D, "280,750 340,730 330,750 290,760"],
 ["right", D, "320,770 350,760 340,780 320,785"],
 ["right", D, "260,820 305,810 290,840 265,835"],
 ["right", D, "225,975 280,940 270,960 230,985"],
 ["right", D, "270,910 310,895 300,910"],
 ["right", D, "610,500 645,535 640,545 605,515"],
 ["right", D, "765,395 790,420 780,425"],
 ["right", D, "880,310 905,330 900,340 878,318"],
 ["right", A, "320,840 350,800 370,790 350,820"]
].forEach(function(h) { draw("hole", h[0], pts(h[1], h[2]), true); });

runway(600, 668, 1263, 163);
runway(675, 772, 1370, 243);

// thresholds
draw("mark", "y", [[653, 622], [596, 662], [604, 674], [659, 631]]);
draw("mark", "y", [[1203, 201], [1259, 159], [1267, 168], [1208, 212]]);
draw("mark", "y", [[711, 737], [671, 767], [679, 778], [717, 746]]);
draw("mark", "y", [[1327, 267], [1366, 237], [1374, 249], [1331, 280]]);

// centrelines
line(A, "y", "-20,380 36,343 80,318 145,293 215,280 320,272 350,278 380,290 405,315 420,345 433,410 420,440 415,510");
line(A, "y", "130,260 180,235 215,228 240,255");
line(A, "y", "145,275 185,240 215,228 225,195");
line(A, "y", "-246,556 -180,515 -100,478 -30,466 50,498 80,520 120,560 155,600 205,672 245,725 270,770");
line(A, "y", "155,730 200,718 245,728");
line(A, "yd", "375,562 405,565 440,590");
line(A, "y", "230,862 330,862");
line(A, "y", "280,840 280,885");
line(A, "yd", "265,850 295,876");
line(A, "yd", "295,850 265,876");
line(A, "y", "270,830 316,796 388,741 440,700 470,650");
twin(A, "475,515 470,545");
twin(A, "445,620 460,600 485,600 485,660 450,720 400,790 310,895");
twin(A, "415,640 370,700 335,745");
twin(A, "460,650 430,690 380,740");
twin(A, "160,900 220,860 260,830 270,790");
line(B, "y", "765,10 720,50 685,88 660,125 645,155 635,185 635,270 660,330 695,370 740,430 805,510");
line(B, "y", "290,370 270,395 253,425 260,500 290,557 330,630 365,710 385,745 430,830 470,910");
line(B, "y", "860,425 830,480 805,520 775,600 738,670");
twin(B, "785,520 775,580 750,630 725,690 660,745 600,772");
twin(B, "560,675 555,720 580,790 590,830");
twin(B, "545,730 560,760 575,770");
twin(B, "480,870 540,845 585,830 610,800 640,775 700,755");
twin(B, "495,905 540,865 580,855");
twin(B, "735,730 760,700 800,680");
twin(B, "830,540 850,590 830,640");
twin(B, "860,580 900,560 950,530 1020,475");
twin(B, "860,635 880,600 915,600 910,630 870,650");
twin(B, "970,575 1010,550");
twin(C, "690,60 730,20 790,-5");
twin(C, "700,90 740,75 780,30");
twin(D, "0,640 60,600 100,565");
twin(D, "0,670 40,655 30,690 0,705");
twin(D, "150,527 400,345 550,230");
twin(D, "620,165 740,85 835,5");
twin(D, "530,262 600,235");
twin(D, "635,215 670,165");
twin(D, "810,40 850,38 875,60");
twin(D, "900,75 965,0");
twin(D, "100,545 100,590 130,640");
twin(D, "165,540 130,580");
twin(D, "80,600 120,640");
line(D, "y", "435,133 500,115 550,150 590,200 675,305");
line(D, "yd", "572,183 608,217 572,217 608,183 572,183 572,217");
line(D, "yd", "608,183 608,217");
line(D, "yd", "555,200 590,165 628,200 590,235 555,200");
line(D, "y", "30,460 80,521 110,580");
line(D, "y", "90,680 190,688 255,645 425,517 570,410 600,418 640,400 700,340 773,296 845,243 915,190 910,150 875,115");
line(D, "y", "90,680 137,733 150,780 140,870 120,940");
line(D, "y", "160,730 165,690 215,740");
line(D, "yd", "675,305 770,230 860,130");
line(D, "y", "870,190 920,250");

hold(A, "225,275 255,278 322,276 425,410 440,430 415,610 170,610 150,590 260,745 470,640 465,575 285,775");
hold(A, "-20,470 38,488");
hold(B, "165,315 180,345 188,370 255,480 258,500 272,525 345,663 360,690 370,715 430,820 433,845 455,873 632,185 630,215 633,262 735,415 707,380 550,725 555,755 580,795 830,510 828,540 780,575 750,635");
hold(D, "65,490 75,512 540,130 555,150");

// south apron
line(C, "y", "440,255 440,355 437,470 437,580");
line(C, "y", "563,200 563,370 590,400 700,403");
line(C, "y", "590,400 560,430 558,600 600,640 580,700");
line(C, "y", "330,360 362,429 395,505 437,580 476,655 515,710 580,708 700,655 800,615 825,590");
line(C, "y", "395,505 550,500");
line(C, "y", "205,430 242,510 275,590 310,671 345,745");
line(C, "y", "205,430 127,476 105,520 100,570");
line(C, "y", "150,710 204,720 270,735 340,745 380,740");
line(C, "y", "270,570 325,549 370,525");
line(C, "y", "670,150 720,145 760,180 790,230");
line(C, "y", "767,60 767,190");
line(C, "y", "990,10 985,110 960,220");
line(C, "y", "600,640 630,680");
line(C, "y", "600,400 650,360 690,340");
line(C, "y", "600,470 600,500 660,400");
[298, 332, 367, 402, 440].forEach(function(y) {
  line(C, "y", "450," + y + " 545," + y);
  ribs(C, "yd", 465, y, 535, y, 6, 0, 9);
});
ribs(C, "y", 165, 505, 210, 600, 6, 22, -9);
ribs(C, "yd", 205, 490, 250, 585, 6, 22, -9);
ribs(C, "y", 265, 445, 300, 530, 5, 26, -9);
ribs(C, "yd", 180, 510, 300, 450, 9, 8, 24);
ribs(C, "y", 300, 605, 345, 705, 6, 22, -8);
ribs(C, "y", 395, 570, 470, 730, 7, 38, -12);
ribs(C, "yd", 505, 545, 530, 680, 9, 30, -10);
ribs(C, "y", 530, 550, 560, 670, 6, 4, 16);
ribs(C, "yd", 640, 610, 790, 600, 8, 6, 24);
ribs(C, "y", 610, 500, 680, 470, 6, 10, 24);
ribs(C, "yd", 600, 600, 650, 590, 5, 10, 22);
ribs(C, "y", 590, 240, 690, 220, 7, 10, 22);
ribs(C, "y", 590, 270, 640, 330, 4, 32, 2);
ribs(C, "yd", 690, 200, 750, 210, 6, 10, 28);
ribs(C, "y", 820, 100, 820, 235, 7, 24, 1);
ribs(C, "yd", 820, 95, 825, 235, 10, 3, 9);
ribs(C, "y", 935, 90, 935, 210, 5, 20, 0);
ribs(C, "yd", 890, 40, 940, 20, 6, 12, -18);
ribs(C, "y", 640, 350, 730, 380, 6, 24, -14);
ribs(C, "yd", 600, 160, 740, 130, 8, 3, 14);
ribs(C, "yd", 130, 590, 180, 665, 8, 4, 5);
line(C, "w", "472,300 472,450");
line(C, "w", "522,255 522,520");
line(C, "w", "470,535 480,600 520,680");
line(C, "w", "530,530 535,600 570,690");
line(C, "w", "590,500 590,560 610,610");
line(C, "w", "600,230 600,350 640,360");
line(C, "w", "600,230 660,200 740,190 770,260");
line(C, "w", "610,450 700,420");
line(C, "w", "145,510 205,620");
line(C, "w", "290,595 360,745 430,745 480,748");
line(C, "w", "90,640 115,640 120,670 150,705 240,710");
line(C, "w", "155,740 165,800 215,795 270,825 340,790 440,755");
line(C, "w", "205,640 290,790");
line(C, "w", "115,560 110,620 120,650");
line(C, "w", "660,560 665,680 710,720");
line(C, "w", "665,620 740,600 830,620");
line(C, "w", "770,525 835,585 830,620");
line(C, "w", "960,50 960,150");
line(C, "w", "810,60 810,200");
line(C, "w", "895,245 970,262");
line(C, "w3", "335,582 410,728");
line(C, "w3", "155,530 200,610");
line(C, "w3", "300,420 340,495");
line(C, "w3", "215,680 240,715");
line(C, "w3", "695,245 775,285");
line(C, "w3", "670,305 725,335");
line(C, "w3", "650,517 745,487");
line(C, "w3", "675,557 760,530");
line(C, "w3", "825,625 720,715");
line(C, "w3", "872,30 850,230");
line(C, "w3", "905,80 895,230");
line(C, "w3", "1020,70 1005,150 980,235");

// east apron
ribs(D, "y", 190, 645, 535, 385, 12, 17, 25);
ribs(D, "y", 270, 670, 575, 445, 11, 17, 25);
ribs(D, "y", 225, 700, 290, 655, 7, 12, 18);
ribs(D, "yd", 440, 540, 560, 470, 10, 16, 28);
ribs(D, "yd", 400, 480, 510, 400, 7, 4, 34);
ribs(D, "y", 600, 340, 640, 390, 3, -20, -30);
ribs(D, "y", 735, 225, 850, 145, 12, 13, 22);
ribs(D, "yd", 730, 225, 860, 170, 8, 20, -14);
ribs(D, "y", 620, 320, 720, 270, 7, 12, -10);
ribs(D, "yd", 690, 350, 760, 290, 6, 6, 18);
ribs(D, "yd", 770, 250, 840, 230, 5, 14, 22);
line(D, "w", "170,635 250,610 390,500 540,405");
line(D, "w", "190,735 300,660 400,575 560,460");
line(D, "w", "400,440 530,350 660,260");
line(D, "w", "550,385 610,380 650,345");
line(D, "w", "665,235 700,280");
line(D, "w", "760,270 810,330");
line(D, "w", "840,120 870,155");
line(D, "w", "780,260 850,205");
line(D, "w", "590,480 500,570 400,630");
line(D, "w", "0,770 60,720 110,740 125,780 120,880");
line(D, "w", "190,775 185,740 220,715");
line(D, "w3", "970,205 905,245 805,325");
line(D, "w3", "775,350 615,470");
line(D, "w3", "395,632 350,665");
line(D, "w3", "330,675 195,775");
line(D, "w", "550,430 590,475");
line(D, "w3", "275,615 315,660");
line(D, "w", "865,88 670,230");
line(D, "w3", "178,800 165,880 138,965");
line(D, "w", "60,960 120,980 140,960");
line(A, "w", "482,530 487,600 495,690");

// taxi network nodes
[[A, "36,343 145,293 215,280 415,490 155,604 207,674 199,719 388,741 415,751 316,796 364,822 305,863 52,500"],
 [B, "743,26 685,88 645,157 641,277 692,370 752,442 253,425 290,558 328,630 541,707 807,520 773,597 738,670 963,525 991,580 833,778 711,837 708,909 828,910 632,909 400,955 880,664"],
 [C, "480,502 325,549 242,510 437,580 476,655 310,671 270,735 707,653 127,476 100,570 767,105 975,13 722,99"],
 [D, "502,117 904,24 763,73 691,127 507,268 434,322 363,378 291,434 219,488 80,521 38,624 100,682 137,733 255,645 327,590 425,517 498,464 633,401 773,296 845,243"]
].forEach(function(g) {
  pts(g[0], g[1]).forEach(function(p) { box("dot", "green", p[0], p[1], 5, 4); });
});

// signs
[[A, "167,250 333,244 405,277 167,330 235,320 386,436 23,442 376,508 171,567 132,638 478,720 426,791 140,888 -110,525 -9,510"],
 [B, "716,117 675,188 599,270 734,360 685,419 302,409 305,499 224,521 345,571 259,594 380,643 297,665 336,738 889,454 978,475 808,603 724,625 403,868 646,863 611,945"],
 [C, "73,565 278,672 311,771 789,-78"],
 [D, "817,71 669,104 744,127 484,243 411,298 529,290 340,353 457,346 268,409 385,401 196,464 312,456 240,511 11,604"]
].forEach(function(g) {
  pts(g[0], g[1]).forEach(function(p) { box("dot", "blue", p[0] - .5, p[1] + 1, 4, 4); box("dot", "blue", p[0] + 1, p[1] - 1, 4, 3); });
});
pts(A, "468,378 495,519 500,580 265,697 -1115,1287").forEach(function(p) { box("dot", "blue", p[0], p[1], 5, 2); });
pts(D, "65,554").forEach(function(p) { box("dot", "blue", p[0], p[1], 5, 2); });
pts(C, "253,704 195,460 102,463 969,-206").forEach(function(p) { box("dot", "blue", p[0], p[1], 2, 5); });
```
